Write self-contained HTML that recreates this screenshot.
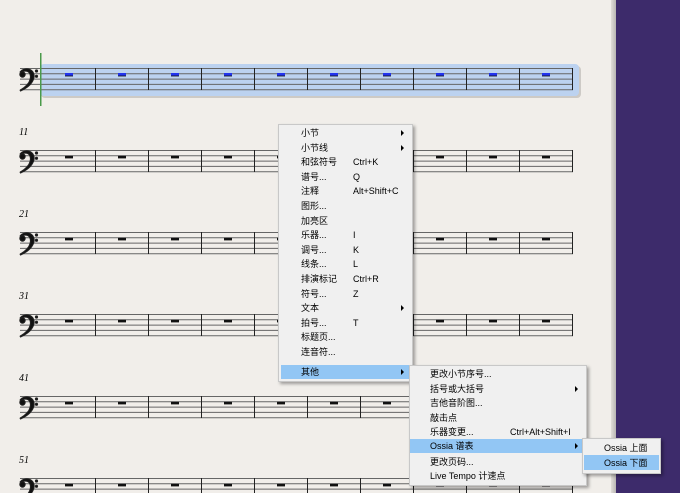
<!DOCTYPE html>
<html><head><meta charset="utf-8"><style>
*{margin:0;padding:0}
body{width:680px;height:493px;overflow:hidden;background:#f1eeea;position:relative;font-family:"Liberation Sans","Noto Sans CJK SC",sans-serif;font-size:9px;color:#000}
.purple{position:absolute;left:616px;top:0;width:64px;height:493px;background:#3d2b6b}
.edge{position:absolute;left:611px;top:0;width:5px;height:493px;background:linear-gradient(90deg,#e0ddd8,#b8b5b2)}
.menu{position:absolute;background:#f0f0f0;border:1px solid #c8c8c8;box-shadow:2px 2px 3px rgba(0,0,0,.35)}
.it{position:absolute;height:14px;line-height:14px;white-space:nowrap}
.hl{position:absolute;background:#92c6f4}
.ar{position:absolute;width:0;height:0;border-left:3px solid #000;border-top:3px solid transparent;border-bottom:3px solid transparent}
.num{position:absolute;left:19px;font-family:"Liberation Serif",serif;font-style:italic;font-size:10px}
</style></head><body>
<div class="edge"></div><div class="purple"></div>
<svg width="612" height="493" style="position:absolute;left:0;top:0">
<defs>
<g id="clef"><path d="M20 4c2-3 7-4 10-2.5 4 2 5 6 3.5 10-2 5-7 9-13 11.5l-.4-.8c5-3 9-6.5 10-11 1-4-.5-7.5-3.5-8-2.5-.4-4.5.5-5 2z" fill="#111"/><circle cx="22.5" cy="6.5" r="2.7" fill="#111"/><circle cx="36.5" cy="3" r="1.1" fill="#111"/><circle cx="36.5" cy="8.3" r="1.1" fill="#111"/></g>
<g id="st" stroke="#222" stroke-width="1"><path d="M20 0.5H573M20 5.8H573M20 11.1H573M20 16.4H573M20 21.7H573" stroke="#666"/>
<path d="M95.5 0V22M148.5 0V22M201.5 0V22M254.5 0V22M307.5 0V22M360.5 0V22M413.5 0V22M466.5 0V22M519.5 0V22M572.5 0V22"/>
<g fill="#111" stroke="none"><rect x="65" y="5.8" width="8" height="2.6"/><rect x="118" y="5.8" width="8" height="2.6"/><rect x="171" y="5.8" width="8" height="2.6"/><rect x="224" y="5.8" width="8" height="2.6"/><rect x="277" y="5.8" width="8" height="2.6"/><rect x="330" y="5.8" width="8" height="2.6"/><rect x="383" y="5.8" width="8" height="2.6"/><rect x="436" y="5.8" width="8" height="2.6"/><rect x="489" y="5.8" width="8" height="2.6"/><rect x="542" y="5.8" width="8" height="2.6"/></g>
<use href="#clef" x="0" y="0"/></g>
</defs>
<rect x="41" y="66" width="540" height="32" rx="4" fill="#b5b2ae" opacity=".6"/>
<rect x="40" y="64" width="539" height="32" rx="4" fill="#bcd2f0"/>
<g transform="translate(0,68)"><use href="#st"/></g>
<g fill="#2233ee"><rect x="65" y="73" width="8" height="2.6"/><rect x="118" y="73" width="8" height="2.6"/><rect x="171" y="73" width="8" height="2.6"/><rect x="224" y="73" width="8" height="2.6"/><rect x="277" y="73" width="8" height="2.6"/><rect x="330" y="73" width="8" height="2.6"/><rect x="383" y="73" width="8" height="2.6"/><rect x="436" y="73" width="8" height="2.6"/><rect x="489" y="73" width="8" height="2.6"/><rect x="542" y="73" width="8" height="2.6"/></g>
<rect x="40" y="53" width="1.5" height="53" fill="#4a9a4a"/>
<g transform="translate(0,150)"><use href="#st"/></g>
<g transform="translate(0,232)"><use href="#st"/></g>
<g transform="translate(0,314)"><use href="#st"/></g>
<g transform="translate(0,396)"><use href="#st"/></g>
<g transform="translate(0,478)"><use href="#st"/></g>
</svg>
<div class="num" style="top:127px">11</div>
<div class="num" style="top:209px">21</div>
<div class="num" style="top:291px">31</div>
<div class="num" style="top:373px">41</div>
<div class="num" style="top:455px">51</div>

<div class="menu" style="left:278px;top:124px;width:133px;height:256px">
<div class="hl" style="left:2px;top:240px;width:129px;height:14px"></div>
<div class="it" style="left:22px;top:1px">小节</div><div class="ar" style="left:122px;top:5px"></div>
<div class="it" style="left:22px;top:15.6px">小节线</div><div class="ar" style="left:122px;top:20px"></div>
<div class="it" style="left:22px;top:30.2px">和弦符号</div><div class="it" style="left:74px;top:30.2px">Ctrl+K</div>
<div class="it" style="left:22px;top:44.8px">谱号...</div><div class="it" style="left:74px;top:44.8px">Q</div>
<div class="it" style="left:22px;top:59.4px">注释</div><div class="it" style="left:74px;top:59.4px">Alt+Shift+C</div>
<div class="it" style="left:22px;top:74px">图形...</div>
<div class="it" style="left:22px;top:88.6px">加亮区</div>
<div class="it" style="left:22px;top:103.2px">乐器...</div><div class="it" style="left:74px;top:103.2px">I</div>
<div class="it" style="left:22px;top:117.8px">调号...</div><div class="it" style="left:74px;top:117.8px">K</div>
<div class="it" style="left:22px;top:132.4px">线条...</div><div class="it" style="left:74px;top:132.4px">L</div>
<div class="it" style="left:22px;top:147px">排演标记</div><div class="it" style="left:74px;top:147px">Ctrl+R</div>
<div class="it" style="left:22px;top:161.6px">符号...</div><div class="it" style="left:74px;top:161.6px">Z</div>
<div class="it" style="left:22px;top:176.2px">文本</div><div class="ar" style="left:122px;top:180px"></div>
<div class="it" style="left:22px;top:190.8px">拍号...</div><div class="it" style="left:74px;top:190.8px">T</div>
<div class="it" style="left:22px;top:205.4px">标题页...</div>
<div class="it" style="left:22px;top:220px">连音符...</div>
<div class="it" style="left:22px;top:240px">其他</div><div class="ar" style="left:122px;top:244px"></div>
</div>

<div class="menu" style="left:409px;top:365px;width:176px;height:119px">
<div class="hl" style="left:0px;top:73px;width:174px;height:14px"></div>
<div class="it" style="left:20px;top:1px">更改小节序号...</div>
<div class="it" style="left:20px;top:15.6px">括号或大括号</div><div class="ar" style="left:165px;top:20px"></div>
<div class="it" style="left:20px;top:30.2px">吉他音阶图...</div>
<div class="it" style="left:20px;top:44.8px">敲击点</div>
<div class="it" style="left:20px;top:59.4px">乐器变更...</div><div class="it" style="left:100px;top:59.4px">Ctrl+Alt+Shift+I</div>
<div class="it" style="left:20px;top:73px">Ossia 谱表</div><div class="ar" style="left:165px;top:77px"></div>
<div class="it" style="left:20px;top:88.6px">更改页码...</div>
<div class="it" style="left:20px;top:103.2px">Live Tempo 计速点</div>
</div>

<div class="menu" style="left:582px;top:438px;width:77px;height:34px">
<div class="hl" style="left:1px;top:16px;width:75px;height:15px"></div>
<div class="it" style="left:21px;top:2px">Ossia 上面</div>
<div class="it" style="left:21px;top:17px">Ossia 下面</div>
</div>
</body></html>
